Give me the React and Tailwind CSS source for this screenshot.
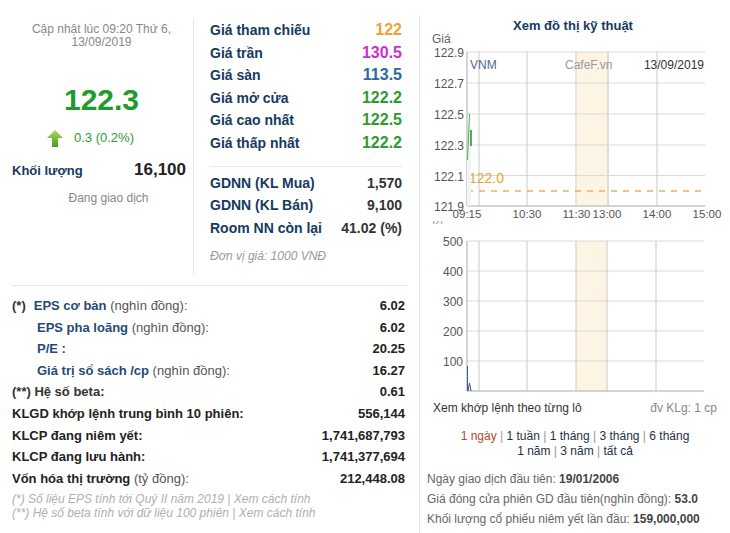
import React from "react";

const F = "font-['Liberation_Sans',Arial,sans-serif]";

function UpArrow() {
  return (
    <svg width="16" height="17" viewBox="0 0 16 17">
      <defs>
        <linearGradient id="ga" x1="0" y1="0" x2="0" y2="1">
          <stop offset="0" stopColor="#a6dc5a" />
          <stop offset="1" stopColor="#4c9a1c" />
        </linearGradient>
      </defs>
      <path d="M8 0 L16 8 L11 8 L11 17 L5 17 L5 8 L0 8 Z" fill="url(#ga)" />
    </svg>
  );
}

function PriceRow({ label, value, color, big }) {
  return (
    <div className="flex justify-between items-baseline leading-[22.6px]">
      <span className="text-[14px] font-bold text-[#163a5f]">{label}</span>
      <span className={`${big ? "text-[16px]" : "text-[14px]"} font-bold ${color}`}>{value}</span>
    </div>
  );
}

function StatRow({ children, value }) {
  return (
    <div className="flex justify-between items-baseline leading-[21.6px] text-[13px]">
      <span>{children}</span>
      <span className="font-bold text-[#222]">{value}</span>
    </div>
  );
}

function Chart() {
  const priceH = [52, 83, 114, 145, 175.5, 206];
  const priceL = ["122.9", "122.7", "122.5", "122.3", "122.1", "121.9"];
  const volH = [241, 271, 301, 331, 361, 391];
  const volL = ["500", "400", "300", "200", "100"];
  const vx = [479, 527, 576, 608, 657];
  const tl = [
    ["09:15", 467],
    ["10:30", 527],
    ["11:30", 576.5],
    ["13:00", 607],
    ["14:00", 657],
    ["15:00", 707],
  ];
  return (
    <svg width="310" height="367" viewBox="420 31 310 367" style={{ fontFamily: "'Liberation Sans', Arial, sans-serif" }}>
      {/* price chart */}
      <text x="432" y="42.5" fontSize="12" fill="#666">Giá</text>
      <rect x="577" y="52" width="31" height="154" fill="#fdf4e3" />
      {priceH.map((y) => (
        <line key={y} x1="467" x2="705" y1={y} y2={y} stroke="#d9d9d9" strokeWidth="1" />
      ))}
      {vx.map((x) => (
        <line key={x} x1={x} x2={x} y1="52" y2="206" stroke="#c9c9c9" strokeWidth="1" />
      ))}
      <line x1="608" x2="608" y1="52" y2="206" stroke="#dcdcdc" strokeWidth="2" />
      <line x1="467" x2="467" y1="52" y2="206" stroke="#aaa" strokeWidth="1" />
      <line x1="467" x2="705" y1="206" y2="206" stroke="#bbb" strokeWidth="1" />
      {priceL.map((t, i) => (
        <text key={t} x="464" y={priceH[i] + 5} fontSize="12" fill="#555" textAnchor="end">{t}</text>
      ))}
      <text x="470" y="69" fontSize="12" fill="#4c6a8c">VNM</text>
      <text x="565" y="69" fontSize="12" fill="#9a9a9a">CafeF.vn</text>
      <text x="704" y="69" fontSize="12" fill="#333" textAnchor="end">13/09/2019</text>
      <line x1="467" x2="705" y1="191" y2="191" stroke="#f3b04c" strokeWidth="1.5" strokeDasharray="6 6" />
      <text x="469" y="183" fontSize="14" fill="#eea236">122.0</text>
      <polygon points="467,160 469.5,114 471,130 471,206 467,206" fill="#f1f4f4" />
      <line x1="467.5" y1="160" x2="469.5" y2="114" stroke="#48b548" strokeWidth="1" />
      <line x1="471" y1="130" x2="471" y2="146" stroke="#2a8a2a" strokeWidth="1.5" />
      {tl.map(([t, x]) => (
        <text key={t} x={x} y="218" fontSize="11.5" fill="#555" textAnchor="middle">{t}</text>
      ))}
      <text x="432" y="230" fontSize="12" fill="#aaa">KL</text>
      <rect x="428" y="224" width="30" height="6" fill="#fff" />

      {/* volume chart */}
      <rect x="576" y="241" width="31" height="150" fill="#fdf4e3" />
      {volH.map((y) => (
        <line key={y} x1="467" x2="704" y1={y} y2={y} stroke="#d9d9d9" strokeWidth="1" />
      ))}
      {[479, 527, 576, 607, 656].map((x) => (
        <line key={x} x1={x} x2={x} y1="241" y2="391" stroke="#c9c9c9" strokeWidth="1" />
      ))}
      <line x1="467" x2="467" y1="241" y2="391" stroke="#aaa" strokeWidth="1" />
      <line x1="467" x2="704" y1="391" y2="391" stroke="#bbb" strokeWidth="1" />
      {volL.map((t, i) => (
        <text key={t} x="463" y={volH[i] + 5} fontSize="12" fill="#555" textAnchor="end">{t}</text>
      ))}
      <line x1="467.5" x2="467.5" y1="366" y2="391" stroke="#3b5a86" strokeWidth="1" />
      <polyline points="468,391 469.5,383 471,391" fill="none" stroke="#3b5a86" strokeWidth="1" />
    </svg>
  );
}

export default function App() {
  return (
    <div className={`${F} w-[730px] h-[533px] bg-white flex overflow-hidden`}>
      {/* left part */}
      <div className="w-[419px] flex flex-col">
        <div className="flex pt-[18px] h-[275px]">
          {/* price column */}
          <div className="w-[194px] border-r border-[#e6e6e6] flex flex-col">
            <div className="mt-[5px] pl-[10px] text-center text-[12px] leading-[13px] text-[#888]">
              Cập nhật lúc 09:20 Thứ 6,
              <br />
              13/09/2019
            </div>
            <div className="mt-[34px] pl-[10px] text-center text-[30px] leading-[34px] font-bold text-[#1f9b2b]">122.3</div>
            <div className="mt-[12px] pr-[12px] flex justify-center items-center gap-[11px] h-[18px]">
              <UpArrow />
              <span className="text-[13px] text-[#2e9b30]">0.3 (0.2%)</span>
            </div>
            <div className="mt-[10px] pl-[12px] pr-[7px] flex justify-between items-baseline h-[20px]">
              <span className="text-[13px] font-bold text-[#163a5f]">Khối lượng</span>
              <span className="text-[17px] font-bold text-[#222]">16,100</span>
            </div>
            <div className="mt-[14px] pl-[24px] text-center text-[12px] leading-[14px] text-[#888]">Đang giao dịch</div>
          </div>
          {/* reference prices */}
          <div className="flex-1 pl-[16px] pr-[17px] pt-[1px]">
            <PriceRow label="Giá tham chiếu" value="122" color="text-[#eea236]" big />
            <PriceRow label="Giá trần" value="130.5" color="text-[#cc2fcc]" big />
            <PriceRow label="Giá sàn" value="113.5" color="text-[#2c6a9e]" big />
            <PriceRow label="Giá mở cửa" value="122.2" color="text-[#2e9b30]" big />
            <PriceRow label="Giá cao nhất" value="122.5" color="text-[#2e9b30]" big />
            <PriceRow label="Giá thấp nhất" value="122.2" color="text-[#2e9b30]" big />
            <div className="mt-[11px] border-t border-[#e6e6e6]" />
            <div className="mt-[5px]">
              <PriceRow label="GDNN (KL Mua)" value="1,570" color="text-[#333]" />
              <PriceRow label="GDNN (KL Bán)" value="9,100" color="text-[#333]" />
              <PriceRow label="Room NN còn lại" value="41.02 (%)" color="text-[#333]" />
            </div>
            <div className="mt-[10px] text-[12px] leading-[14px] italic text-[#999]">Đơn vị giá: 1000 VNĐ</div>
          </div>
        </div>
        {/* stats */}
        <div className="mt-[10px] ml-[12px] mr-[11px] pr-[3px] border-t border-[#e6e6e6] pt-[9px] text-[#555]">
          <StatRow value="6.02">
            <span className="font-bold text-[#333]">(*)</span>
            <span className="ml-[8px] font-bold text-[#1f4a78]">EPS cơ bản</span> (nghìn đồng):
          </StatRow>
          <StatRow value="6.02">
            <span className="ml-[25px] font-bold text-[#1f4a78]">EPS pha loãng</span> (nghìn đồng):
          </StatRow>
          <StatRow value="20.25">
            <span className="ml-[25px] font-bold text-[#1f4a78]">P/E :</span>
          </StatRow>
          <StatRow value="16.27">
            <span className="ml-[25px] font-bold text-[#1f4a78]">Giá trị sổ sách /cp</span> (nghìn đồng):
          </StatRow>
          <StatRow value="0.61">
            <span className="font-bold text-[#333]">(**) Hệ số beta:</span>
          </StatRow>
          <StatRow value="556,144">
            <span className="font-bold text-[#222]">KLGD khớp lệnh trung bình 10 phiên:</span>
          </StatRow>
          <StatRow value="1,741,687,793">
            <span className="font-bold text-[#222]">KLCP đang niêm yết:</span>
          </StatRow>
          <StatRow value="1,741,377,694">
            <span className="font-bold text-[#222]">KLCP đang lưu hành:</span>
          </StatRow>
          <StatRow value="212,448.08">
            <span className="font-bold text-[#222]">Vốn hóa thị trường</span> (tỷ đồng):
          </StatRow>
          <div className="mt-[3px] text-[12px] leading-[14px] italic text-[#b0b0b0]">
            <div>(*) Số liệu EPS tính tới Quý II năm 2019 | Xem cách tính</div>
            <div>(**) Hệ số beta tính với dữ liệu 100 phiên | Xem cách tính</div>
          </div>
        </div>
      </div>
      {/* right part */}
      <div className="w-[311px] mt-[15px] border-l border-[#e6e6e6] flex flex-col">
        <div className="mt-[6px] text-center text-[13px] leading-[10px] font-bold text-[#163a5f] pr-[4px]">Xem đồ thị kỹ thuật</div>
        <Chart />
        <div className="h-[20px] flex justify-between items-center pl-[13px] pr-[13px] text-[12px]">
          <span className="text-[#333]">Xem khớp lệnh theo từng lô</span>
          <span className="text-[#888]">đv KLg: 1 cp</span>
        </div>
        <div className="mt-[11px] text-center text-[12px] leading-[15px] text-[#1d2f45]">
          <div>
            <span className="text-[#b5472b]">1 ngày</span>
            <span className="text-[#999]"> | </span>1 tuần<span className="text-[#999]"> | </span>1 tháng
            <span className="text-[#999]"> | </span>3 tháng<span className="text-[#999]"> | </span>6 tháng
          </div>
          <div>
            1 năm<span className="text-[#999]"> | </span>3 năm<span className="text-[#999]"> | </span>tất cả
          </div>
        </div>
        <div className="mt-[10px] pl-[7px] text-[12px] leading-[20px] text-[#666]">
          <div>
            Ngày giao dịch đầu tiên: <span className="font-bold text-[#444]">19/01/2006</span>
          </div>
          <div>
            Giá đóng cửa phiên GD đầu tiên(nghìn đồng): <span className="font-bold text-[#444]">53.0</span>
          </div>
          <div>
            Khối lượng cổ phiếu niêm yết lần đầu: <span className="font-bold text-[#444]">159,000,000</span>
          </div>
        </div>
      </div>
    </div>
  );
}
